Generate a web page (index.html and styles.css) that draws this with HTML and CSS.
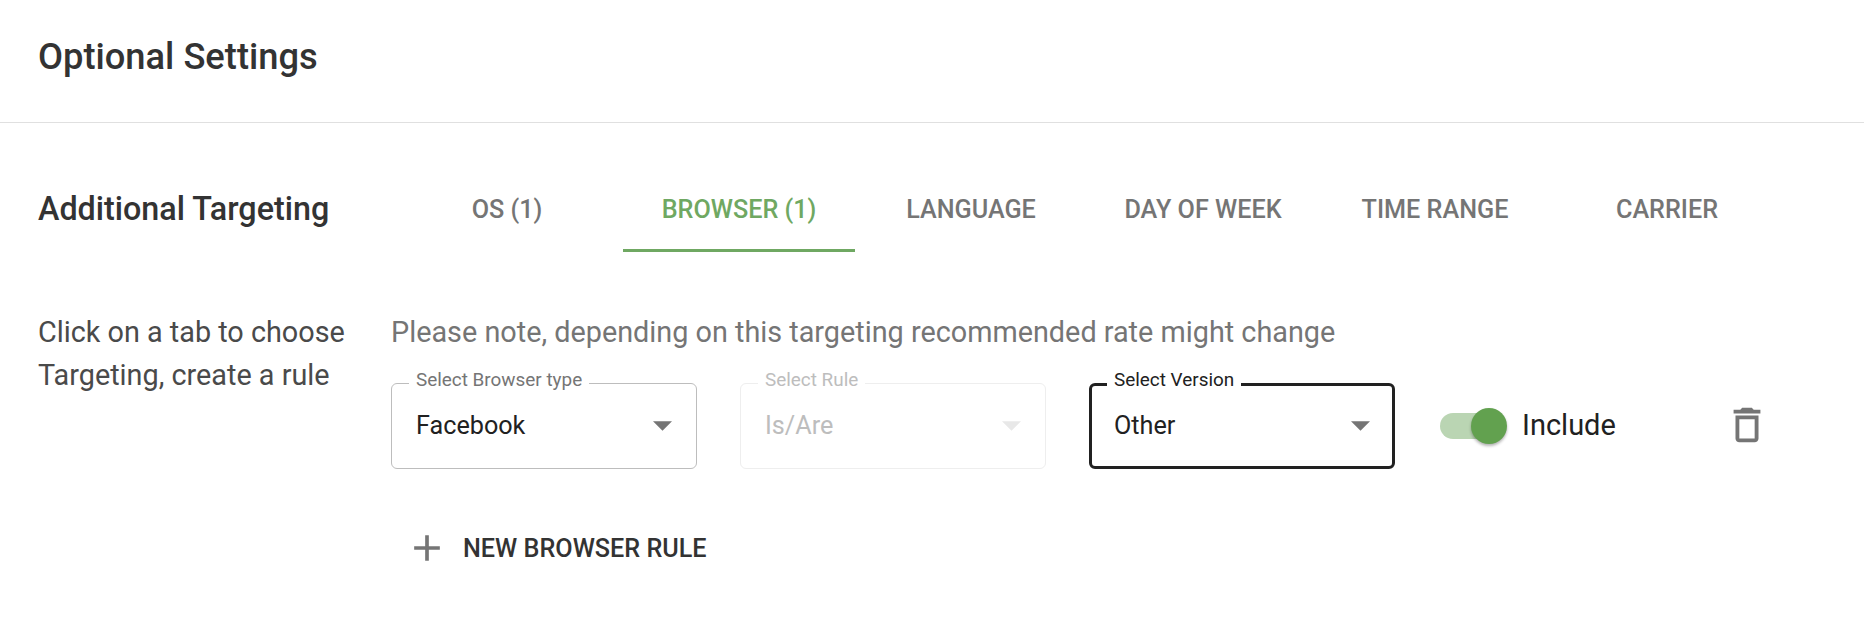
FILE: index.html
```html
<!DOCTYPE html>
<html lang="en">
<head>
<meta charset="utf-8">
<title>Optional Settings</title>
<link rel="stylesheet" href="styles.css">
</head>
<body>
<header class="page-head"><h1 class="page-title">Optional Settings</h1></header>
<main class="content">
  <section class="tab-row">
    <h2 class="section-title">Additional Targeting</h2>
    <nav class="tabs">
      <span class="tab">OS (1)</span>
      <span class="tab tab-active">BROWSER (1)</span>
      <span class="tab">LANGUAGE</span>
      <span class="tab">DAY OF WEEK</span>
      <span class="tab">TIME RANGE</span>
      <span class="tab">CARRIER</span>
    </nav>
  </section>
  <section class="rule-row">
    <p class="hint">Click on a tab to choose Targeting, create a rule</p>
    <div class="rule-body">
      <p class="note">Please note, depending on this targeting recommended rate might change</p>
      <div class="rule">
        <div class="select">
          <span class="select-label">Select Browser type</span>
          <span class="select-value">Facebook</span>
          <svg class="caret" viewBox="0 0 20 10"><path d="M0 0h20L10 10z"/></svg>
        </div>
        <div class="select select-disabled">
          <span class="select-label">Select Rule</span>
          <span class="select-value">Is/Are</span>
          <svg class="caret" viewBox="0 0 20 10"><path d="M0 0h20L10 10z"/></svg>
        </div>
        <div class="select select-focused">
          <span class="select-label">Select Version</span>
          <span class="select-value">Other</span>
          <svg class="caret" viewBox="0 0 20 10"><path d="M0 0h20L10 10z"/></svg>
        </div>
        <div class="toggle-group">
          <span class="toggle"><span class="toggle-thumb"></span></span>
          <span class="toggle-label">Include</span>
        </div>
        <svg class="trash" viewBox="0 0 24 24"><path d="M6 19c0 1.1.9 2 2 2h8c1.100 0 2-.9 2-2V7H6v12zM8 9h8v10H8V9zm7.500-5-1-1h-5l-1 1H5v2h14V4h-3.500z"/></svg>
      </div>
      <div class="add-rule">
        <svg class="plus" viewBox="0 0 24 24"><path d="M19 13h-6v6h-2v-6H5v-2h6V5h2v6h6v2z"/></svg>
        <span class="add-text">NEW BROWSER RULE</span>
      </div>
    </div>
  </section>
</main>
</body>
</html>
```

FILE: styles.css
```css
* { box-sizing: border-box; }
html, body { margin: 0; padding: 0; background: #fff; }
body { width: 1864px; height: 626px; overflow: hidden; font-family: Roboto, sans-serif; color: #333; }
h1, h2, p { margin: 0; }

.page-head { height: 123px; padding: 0 38px 10px; display: flex; align-items: center; border-bottom: 1px solid #e0e0e0; }
.page-title { font-size: 36.3px; font-weight: 500; color: #333; }

.content { padding: 0 38px; }
.tab-row { display: flex; align-items: stretch; margin-top: 44px; }
.section-title { width: 353px; flex: none; font-size: 32.3px; font-weight: 500; line-height: 84px; height: 84px; color: #333; }
.tabs { display: flex; }
.tab { width: 232px; height: 85px; line-height: 86px; text-align: center; font-size: 25.2px; font-weight: 500; color: #757575; }
.tab-active { color: #6fa862; border-bottom: 3px solid #6fa862; }

.rule-row { display: flex; margin-top: 59px; }
.hint { width: 353px; flex: none; font-size: 28.8px; line-height: 43px; color: #4a4a4a; padding-right: 30px; }
.rule-body { flex: 1; }
.note { font-size: 28.8px; line-height: 43px; color: #757575; }
.rule { display: flex; align-items: center; margin-top: 29px; }

.select { position: relative; width: 306px; height: 86px; flex: none; margin-right: 43px; border: 1px solid #bdbdbd; border-radius: 6px; display: flex; align-items: center; justify-content: space-between; padding: 0 24px 2px 24px; }
.select-label { position: absolute; left: 17px; top: -15px; padding: 0 7px; background: #fff; font-size: 18.9px; line-height: 21px; color: #757575; }
.select-value { font-size: 25.2px; color: #212121; }
.caret { width: 19px; height: 10px; fill: #757575; position: relative; top: 1px; }
.select-disabled { border-color: #eee; }
.select-disabled .select-label, .select-disabled .select-value { color: #bdbdbd; }
.select-disabled .caret { fill: #e8e8e8; }
.select-focused { border: 3px solid #212121; margin-right: 45px; padding: 0 22px 2px 22px; }
.select-focused .select-label { left: 15px; top: -17px; color: #212121; }

.toggle-group { display: flex; align-items: center; width: 290px; }
.toggle { position: relative; width: 66px; height: 26px; border-radius: 13px; background: #bad5b3; flex: none; }
.toggle-thumb { position: absolute; right: -1px; top: -5px; width: 36px; height: 36px; border-radius: 50%; background: #62a14f; box-shadow: 0 2px 3px rgba(0,0,0,.3); }
.toggle-label { margin: 0 0 2px 16px; font-size: 29px; color: #212121; }
.trash { width: 46px; height: 46px; fill: #757575; flex: none; margin: 0 0 2px -6px; }

.add-rule { display: flex; align-items: center; margin-top: 57px; padding-left: 14px; }
.plus { width: 44px; height: 44px; fill: #757575; flex: none; }
.add-text { margin-left: 14px; font-size: 25.2px; font-weight: 500; color: #333; }
```
